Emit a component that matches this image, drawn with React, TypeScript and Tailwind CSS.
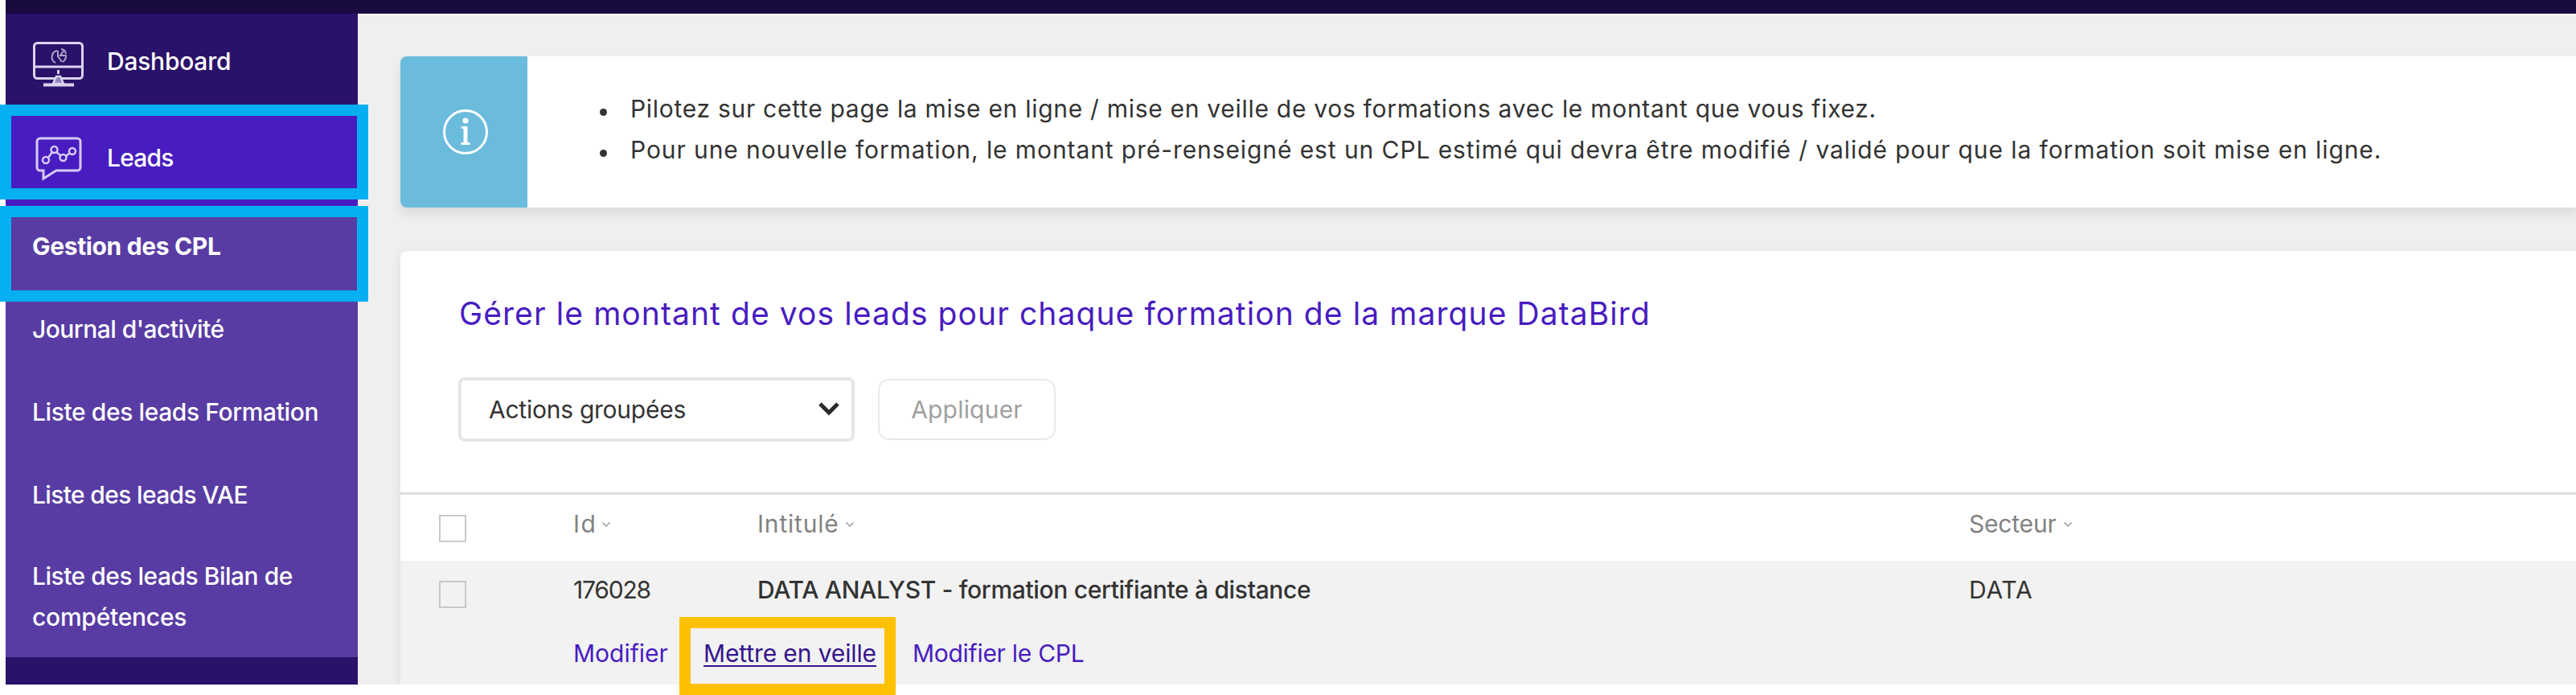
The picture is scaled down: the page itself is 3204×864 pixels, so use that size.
import React from "react"

const subItems = [
    { name: "Gestion des CPL", style: "font-bold tracking-[-0.35px]" },
    { name: "Journal d'activité", style: "font-medium tracking-[-0.55px]" },
    { name: "Liste des leads Formation", style: "font-medium tracking-[-0.4px]" },
    { name: "Liste des leads VAE", style: "font-medium tracking-[-0.65px]" },
]

const DashboardIcon: React.FC = () => (
    <svg width="66" height="58" viewBox="0 0 66 58" fill="none" stroke="#d9d3ee" strokeWidth="3">
        <rect x="2.5" y="2.5" width="60" height="44" rx="4" />
        <path d="M3 32H62" />
        <path d="M32.5 36v5" />
        <path d="M26 53l4-9h5l4 9z" fill="#8f83bd" strokeWidth="2.5" />
        <path d="M14 54.5h38" strokeWidth="4" />
        <path d="M31 12a8 8 0 0 0-2 15M32 12v7l5 7M38 26a9 9 0 0 0 4-8h-7l5-7M36 10a7 7 0 0 1 6 6" strokeWidth="2" opacity=".75" />
    </svg>
)

const LeadsIcon: React.FC = () => (
    <svg width="60" height="56" viewBox="0 0 60 56" fill="none" stroke="#d6c9f5" strokeWidth="3">
        <path d="M7 3h46a4 4 0 0 1 4 4v32a4 4 0 0 1-4 4H27L11 53V43H7a4 4 0 0 1-4-4V7a4 4 0 0 1 4-4z" />
        <g strokeWidth="2.5">
            <circle cx="14" cy="30" r="4" />
            <circle cx="24.5" cy="17" r="4" />
            <circle cx="35.5" cy="27" r="4" />
            <circle cx="47" cy="19" r="4" />
            <path d="M17 27l5-7M27 20l5 4M39 25l5-4" />
        </g>
    </svg>
)

const InfoIcon: React.FC = () => (
    <svg width="58" height="58" viewBox="0 0 58 58" fill="none" stroke="#fff" strokeWidth="3">
        <circle cx="29" cy="29" r="26.5" />
        <circle cx="29" cy="15" r="3.5" fill="#fff" stroke="none" />
        <path d="M24 23.5h6M23.5 43.5h11" />
        <path d="M29 22v21" strokeWidth="5" />
    </svg>
)

const SortIcon: React.FC = () => (
    <svg width="12" height="8" viewBox="0 0 12 8" fill="none" stroke="#b5b5b5" strokeWidth="2">
        <path d="M1.5 1.5L6 6l4.5-4.5" />
    </svg>
)

const Bullet: React.FC = () => <span className="w-[9px] h-[9px] mt-[8px] mr-[29px] rounded-full bg-[#333]"></span>

const App: React.FC = () => {
    return (
        <div className="relative w-[3204px] h-[864px] bg-white overflow-hidden pl-[7px] font-[Inter,sans-serif] text-[30px] leading-[51px] text-[#333]">
            <header className="h-[17px] bg-[#190a40]"></header>

            <div className="flex h-[834px]">
                <aside className="w-[438px] shrink-0 bg-[#2a1169] text-white">
                    <div className="h-[122px] flex items-start pt-[34px] pl-[33px]">
                        <DashboardIcon />
                        <span className="ml-[27px] font-medium tracking-[-0.25px]">Dashboard</span>
                    </div>
                    <div className="h-[117px] flex items-start pt-[30px] pl-[36px] bg-[#481cc0]">
                        <LeadsIcon />
                        <span className="ml-[30px] mt-[2px] font-medium tracking-[-0.8px]">Leads</span>
                    </div>
                    <nav className="h-[561px] flex flex-col items-start gap-[52px] pt-[25px] pl-[33px] bg-[#583ca3]">
                        {subItems.map((item) => (
                            <a key={item.name} className={item.style}>{item.name}</a>
                        ))}
                        <a className="-mt-[2px] font-medium tracking-[-0.5px]">Liste des leads Bilan de<br /><span className="tracking-[-0.25px]">compétences</span></a>
                    </nav>
                </aside>

                <main className="flex-1 min-w-0 bg-[#efefef] border-t-2 border-white pl-[53px] overflow-hidden">
                    <section className="mt-[51px] h-[188px] flex bg-white rounded-l-lg shadow-[0_8px_14px_rgba(0,0,0,0.09)]">
                        <div className="w-[158px] flex items-center justify-center pl-[4px] bg-[#6bbcdc] rounded-l-lg">
                            <InfoIcon />
                        </div>
                        <ul className="pt-[40px] pl-[90px]">
                            <li className="flex items-center"><Bullet /><span className="tracking-[0.71px]">Pilotez sur cette page la mise en ligne / mise en veille de vos formations avec le montant que vous fixez.</span></li>
                            <li className="flex items-center"><Bullet /><span className="tracking-[0.91px]">Pour une nouvelle formation, le montant pré-renseigné est un CPL estimé qui devra être modifié / validé pour que la formation soit mise en ligne.</span></li>
                        </ul>
                    </section>

                    <section className="mt-[54px] h-[539px] bg-white rounded-tl-lg shadow-[0_4px_14px_rgba(0,0,0,0.09)]">
                        <div className="h-[300px] pl-[72px] pt-[48px]">
                            <h1 className="pl-px text-[39px] leading-[60px] tracking-[1.08px] text-[#481cc0]">Gérer le montant de vos leads pour chaque formation de la marque DataBird</h1>
                            <div className="flex items-center gap-[29px] mt-[49px]">
                                <div className="w-[493px] h-[80px] flex items-center justify-between border-4 border-[#e6e6e6] rounded-lg pl-[34px] pr-[13px]">
                                    <span className="tracking-[-0.25px]">Actions groupées</span>
                                    <svg width="30" height="20" viewBox="0 0 30 20" fill="none" stroke="#2b2b2b" strokeWidth="5">
                                        <path d="M4 3l11 11L26 3" />
                                    </svg>
                                </div>
                                <button className="w-[221px] h-[76px] border-2 border-[#eaeaea] rounded-[14px] text-[#a0a0a0] tracking-[0.2px]">Appliquer</button>
                            </div>
                        </div>

                        <div className="h-[85px] flex border-t-3 border-[#dedede] pt-[11px] pl-[48px] text-[#828282]">
                            <span className="w-[34px] h-[34px] mt-[14px] border-2 border-[#c8c8c8] bg-white"></span>
                            <div className="w-[229px] ml-[133px] flex items-center h-[51px] gap-[6px]"><span className="tracking-[1.5px]">Id</span><SortIcon /></div>
                            <div className="w-[1507px] flex items-center h-[51px] gap-[7px]"><span className="tracking-[0.8px]">Intitulé</span><SortIcon /></div>
                            <div className="flex items-center h-[51px] gap-[8px]"><span className="tracking-[-0.2px]">Secteur</span><SortIcon /></div>
                        </div>

                        <div className="h-[154px] bg-[#f2f2f2] pt-[11px] pl-[48px]">
                            <div className="flex">
                                <span className="w-[34px] h-[34px] mt-[14px] border-2 border-[#c8c8c8]"></span>
                                <div className="w-[229px] ml-[133px] tracking-[-1.2px]">176028</div>
                                <div className="w-[1507px] font-medium tracking-[-0.34px]">DATA ANALYST - formation certifiante à distance</div>
                                <div className="tracking-[0.8px]">DATA</div>
                            </div>
                            <div className="flex pl-[167px] mt-[28px] text-[#481cc0]">
                                <a className="w-[162px]">Modifier</a>
                                <a className="w-[260px] text-[#34148c] tracking-[-0.12px] underline decoration-2 underline-offset-[4px]">Mettre en veille</a>
                                <a className="tracking-[-0.28px]">Modifier le CPL</a>
                            </div>
                        </div>
                    </section>
                </main>
            </div>

            {/* highlight frames */}
            <div className="absolute left-0 top-[130px] w-[458px] h-[118px] border-14 border-[#02b0f2]"></div>
            <div className="absolute left-0 top-[256px] w-[458px] h-[119px] border-14 border-[#02b0f2]"></div>
            <div className="absolute left-[845px] top-[767px] w-[269px] h-[97px] border-14 border-[#ffc000]"></div>
        </div>
    )
}

export default App
